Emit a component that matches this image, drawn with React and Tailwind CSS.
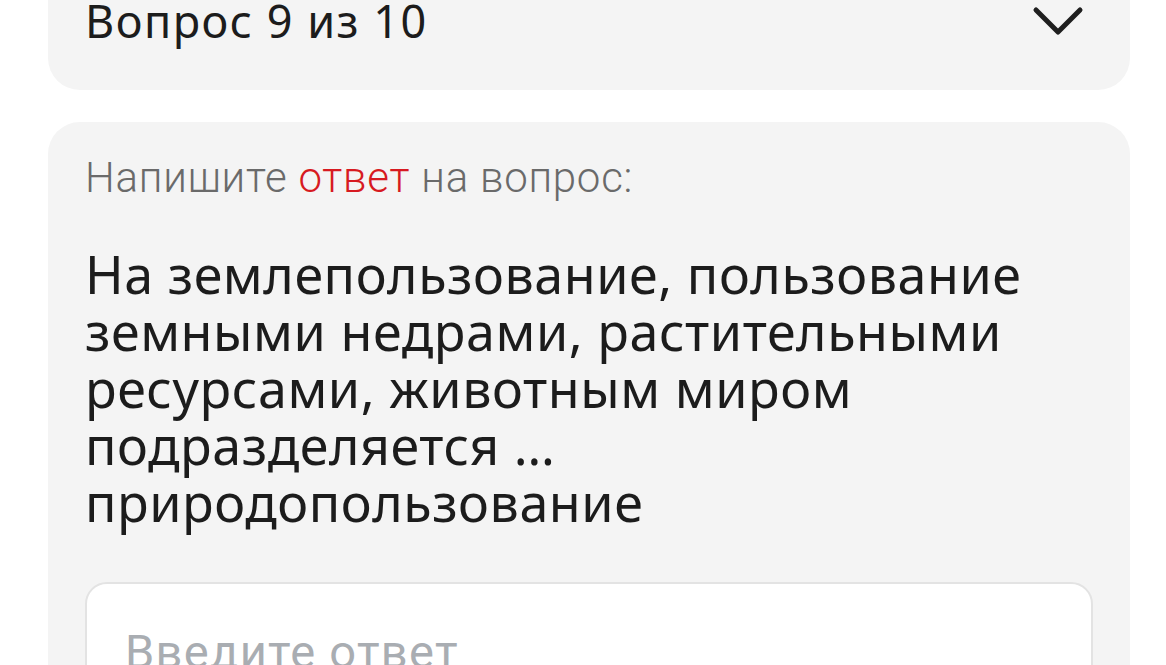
export default function App() {
  return (
    <div className="w-[1166px] h-[665px] overflow-hidden bg-white" style={{ fontFamily: '"Noto Sans", sans-serif' }}>
      <div className="pl-[48px] pr-[36px] flex flex-col gap-[32px] -mt-[30px]">
        {/* Question counter header */}
        <div className="rounded-[32px] bg-[#f4f4f4] flex items-center justify-between pl-[37px] pr-[46px] pt-[28px] pb-[47px]">
          <span className="text-[45px] leading-none tracking-[1.5px] text-[#1c1c1c]">Вопрос 9 из 10</span>
          <svg width="52" height="32" viewBox="0 0 52 32" fill="none">
            <path d="M4 5 L26 27 L48 5" stroke="#1f1f1f" strokeWidth="5" strokeLinecap="round" strokeLinejoin="round" />
          </svg>
        </div>

        {/* Answer card */}
        <div className="rounded-[32px] bg-[#f4f4f4] px-[37px] pt-[35px] h-[600px]">
          <p className="text-[42px] leading-[42px] font-light tracking-[0.75px] text-[#6a6a6a]" style={{ fontFamily: 'Roboto, sans-serif' }}>
            Напишите <span className="text-[#d71a21]">ответ</span> на вопрос:
          </p>
          <p className="mt-[46px] text-[52px] leading-[57px] tracking-[0.55px] text-[#1c1c1c]">
            На землепользование, пользование земными недрами, растительными ресурсами, животным миром подразделяется … природопользование
          </p>
          <div className="mt-[52px] h-[140px] bg-white border-2 border-[#e3e3e3] rounded-[22px] pl-[38px] pt-[44px]">
            <span className="text-[47px] leading-none tracking-[1.3px] text-[#a9adb2]" style={{ fontFamily: 'Roboto, sans-serif' }}>Введите ответ</span>
          </div>
        </div>
      </div>
    </div>
  );
}
